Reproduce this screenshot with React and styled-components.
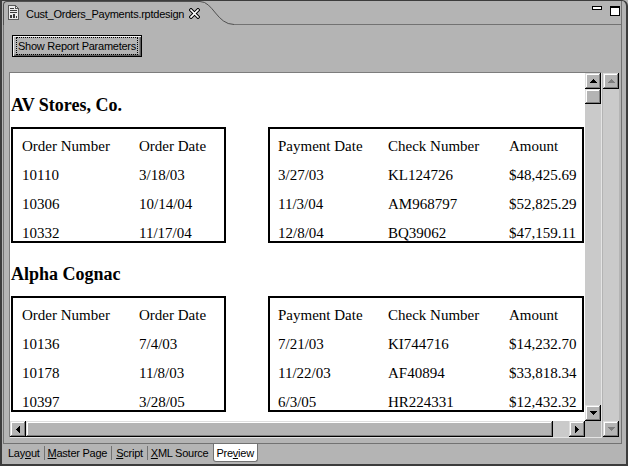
import React from 'react';
import styled, { createGlobalStyle } from 'styled-components';

const FACE = '#b4b4b4';
const TRACK = '#cacaca';
const LINE = '#727272';
const UI_FONT = '"Liberation Sans", Arial, sans-serif';
const SERIF = '"Liberation Serif", "Times New Roman", serif';

const Global = createGlobalStyle`
  html, body { margin: 0; padding: 0; background: ${FACE}; }
  body { width: 628px; height: 466px; overflow: hidden; }
  *, *::before, *::after { box-sizing: border-box; }
`;

const Window = styled.div`
  width: 628px;
  height: 466px;
  background: ${FACE};
  border: 2px solid #3c3c3c;
  border-top-width: 1px;
  border-top-right-radius: 6px;
  display: flex;
  flex-direction: column;
  overflow: hidden;
  font-family: ${UI_FONT};
  font-size: 11px;
  letter-spacing: -0.25px;
  color: #000;
`;

/* ---------- editor tab header ---------- */
const Header = styled.div`
  height: 24px;
  flex: none;
  display: flex;
  margin: 0 4px 0 1px;
`;

const TabBody = styled.div`
  height: 24px;
  display: flex;
  align-items: flex-start;
  border-top: 1px solid #505050;
  border-left: 1px solid #505050;
  border-top-left-radius: 4px;
  padding-left: 4px;
`;

const DocIconWrap = styled.span`
  display: flex;
  margin-top: 3px;
  margin-right: 7px;
`;

const TabTitle = styled.span`
  margin-top: 6px;
  line-height: 13px;
  white-space: nowrap;
`;

const CloseWrap = styled.span`
  display: flex;
  margin-top: 6px;
  margin-left: 5px;
`;

const Curve = styled.svg`
  flex: none;
  display: block;
`;

const HeaderRest = styled.div`
  flex: 1;
  border-bottom: 1px solid ${LINE};
  border-right: 1px solid ${LINE};
  display: flex;
  justify-content: flex-end;
  align-items: flex-start;
  gap: 8px;
  padding: 5px 1px 0 0;
`;

const MinBox = styled.div`
  width: 10px;
  height: 4px;
  border: 1px solid #000;
  background: #fff;
`;

const MaxBox = styled.div`
  width: 10px;
  height: 10px;
  border: 1px solid #000;
  border-top-width: 2px;
  background: #fff;
`;

/* ---------- editor body ---------- */
const Body = styled.div`
  flex: 1;
  display: flex;
  flex-direction: column;
  margin: 0 4px 0 1px;
  border-left: 1px solid ${LINE};
  border-right: 1px solid ${LINE};
  padding: 10px 0 0 5px;
`;

const ParamButton = styled.button`
  width: 130px;
  height: 22px;
  margin-left: 3px;
  padding: 0;
  font-family: ${UI_FONT};
  font-size: 11px;
  letter-spacing: -0.25px;
  color: #000;
  background: ${FACE};
  border: 1px solid #000;
  box-shadow: inset 1px 1px #f4f4f4, inset -1px -1px #5e5e5e, inset -2px -2px #8c8c8c;
  display: flex;
  align-items: center;
  justify-content: center;
`;

const FocusRing = styled.span`
  width: 122px;
  height: 18px;
  border: 1px dotted #000;
  display: flex;
  align-items: center;
  justify-content: center;
  white-space: nowrap;
`;

const PreviewRow = styled.div`
  margin-top: 15px;
  display: flex;
  align-items: flex-start;
`;

const Frame = styled.div`
  border-top: 1px solid #7d7d7d;
  border-left: 1px solid #7d7d7d;
  border-right: 1px solid #e4e4e4;
  border-bottom: 1px solid #e4e4e4;
  display: grid;
  grid-template-columns: 575px 16px;
  grid-template-rows: 348px 16px;
`;

const Viewport = styled.div`
  background: #fff;
  overflow: hidden;
  padding: 22px 0 0 1px;
`;

/* ---------- report content ---------- */
const Section = styled.section`
  margin-bottom: 21px;
`;

const Heading = styled.h2`
  margin: 0 0 12px;
  font-family: ${SERIF};
  font-weight: bold;
  font-size: 18px;
  line-height: 20px;
  letter-spacing: 0;
  white-space: nowrap;
`;

const Tables = styled.div`
  display: flex;
  gap: 42px;
`;

const Box = styled.div`
  width: ${(p) => p.$w}px;
  height: 116px;
  flex: none;
  border: 2px solid #000;
  padding: 3px 0 0 ${(p) => p.$pl}px;
  overflow: hidden;
  font-family: ${SERIF};
  font-size: 15px;
  line-height: 29px;
  letter-spacing: 0;
`;

const Row = styled.div`
  display: grid;
  grid-template-columns: ${(p) => p.$cols};
  white-space: nowrap;
`;

const Cell = styled.div`
  overflow: visible;
`;

/* ---------- scrollbars ---------- */
const ArrowBtn = styled.div`
  width: 16px;
  height: 16px;
  flex: none;
  background: ${FACE};
  box-shadow: inset -1px -1px #000, inset 1px 1px #dedede, inset -2px -2px #7c7c7c, inset 2px 2px #fff;
  display: flex;
  align-items: center;
  justify-content: center;
`;

const Thumb = styled.div`
  flex: none;
  width: ${(p) => (p.$horizontal ? `${p.$len}px` : '16px')};
  height: ${(p) => (p.$horizontal ? '16px' : `${p.$len}px`)};
  background: ${FACE};
  box-shadow: inset -1px -1px #000, inset 1px 1px #dedede, inset -2px -2px #7c7c7c, inset 2px 2px #fff;
`;

const Track = styled.div`
  flex: 1;
  background: ${TRACK};
`;

const VBar = styled.div`
  width: 16px;
  display: flex;
  flex-direction: column;
`;

const HBar = styled.div`
  height: 16px;
  display: flex;
`;

const Corner = styled.div`
  background: ${FACE};
`;

const OuterVBar = styled.div`
  width: 16px;
  height: 364px;
  margin: 1px 0 0 1px;
  display: flex;
  flex-direction: column;
  background: ${TRACK};
`;

/* ---------- bottom page tabs ---------- */
const PageTabs = styled.div`
  height: 21px;
  flex: none;
  margin: 0 4px 0 1px;
  border-top: 1px solid ${LINE};
  display: flex;
  align-items: flex-start;
`;

const PageTab = styled.div`
  height: 14px;
  margin-top: 2px;
  padding: 0 ${(p) => p.$pr}px 0 ${(p) => p.$pl}px;
  border-right: ${(p) => (p.$sep ? `1px solid ${LINE}` : 'none')};
  display: flex;
  align-items: center;
  white-space: nowrap;
`;

const ActiveTab = styled.div`
  height: 18px;
  padding: 0 3px 0 2px;
  background: #fff;
  border: 1px solid ${LINE};
  border-top: none;
  border-radius: 0 0 3px 3px;
  display: flex;
  align-items: center;
  white-space: nowrap;
`;

/* ---------- icons ---------- */
const UpArrow = ({ color = '#000' }) => (
  <svg width="7" height="4" viewBox="0 0 7 4" shapeRendering="crispEdges">
    <path d="M3 0h1v1h1v1h1v1h1v1H0V3h1V2h1V1h1z" fill={color} />
  </svg>
);
const DownArrow = ({ color = '#000' }) => (
  <svg width="7" height="4" viewBox="0 0 7 4" shapeRendering="crispEdges">
    <path d="M0 0h7v1H6v1H5v1H4v1H3V3H2V2H1V1H0z" fill={color} />
  </svg>
);
const LeftArrow = () => (
  <svg width="4" height="7" viewBox="0 0 4 7" shapeRendering="crispEdges">
    <path d="M3 0h1v7H3V6H2V5H1V4H0V3h1V2h1V1h1z" fill="#000" />
  </svg>
);
const RightArrow = () => (
  <svg width="4" height="7" viewBox="0 0 4 7" shapeRendering="crispEdges">
    <path d="M0 0h1v1h1v1h1v1h1v1H3v1H2v1H1v1H0z" fill="#000" />
  </svg>
);

const DocIcon = () => (
  <svg width="11" height="15" viewBox="0 0 11 15" shapeRendering="crispEdges">
    <path d="M0.5 0.5H7.5L10.5 3.5V14.5H0.5Z" fill="#ececec" stroke="#5a5a5a" />
    <path d="M7.5 0.5V3.5H10.5" fill="none" stroke="#5a5a5a" />
    <path d="M2 3.5H6M2 5.5H9M2 7.5H9" stroke="#3c3c3c" />
    <rect x="2" y="10" width="2" height="3" fill="#3c3c3c" />
    <rect x="5" y="9" width="2" height="4" fill="#3c3c3c" />
    <rect x="8" y="11" width="1" height="2" fill="#3c3c3c" />
  </svg>
);

const CloseIcon = () => (
  <svg width="11" height="11" viewBox="0 0 11 11">
    <path d="M2 2L9 9M9 2L2 9" stroke="#000" strokeWidth="3.6" strokeLinecap="square" />
    <path d="M2 2L9 9M9 2L2 9" stroke="#fff" strokeWidth="1.6" strokeLinecap="square" />
  </svg>
);

/* ---------- data ---------- */
const customers = [
  {
    name: 'AV Stores, Co.',
    orders: [
      ['10110', '3/18/03'],
      ['10306', '10/14/04'],
      ['10332', '11/17/04'],
    ],
    payments: [
      ['3/27/03', 'KL124726', '$48,425.69'],
      ['11/3/04', 'AM968797', '$52,825.29'],
      ['12/8/04', 'BQ39062', '$47,159.11'],
    ],
  },
  {
    name: 'Alpha Cognac',
    orders: [
      ['10136', '7/4/03'],
      ['10178', '11/8/03'],
      ['10397', '3/28/05'],
    ],
    payments: [
      ['7/21/03', 'KI744716', '$14,232.70'],
      ['11/22/03', 'AF40894', '$33,818.34'],
      ['6/3/05', 'HR224331', '$12,432.32'],
    ],
  },
];

const OrderCols = '117px 1fr';
const PayCols = '110px 121px 1fr';

const DataTable = ({ width, pl, cols, head, rows }) => (
  <Box $w={width} $pl={pl}>
    <Row $cols={cols}>
      {head.map((h) => (
        <Cell key={h}>{h}</Cell>
      ))}
    </Row>
    {rows.map((r, i) => (
      <Row $cols={cols} key={i}>
        {r.map((c, j) => (
          <Cell key={j}>{c}</Cell>
        ))}
      </Row>
    ))}
  </Box>
);

export default function App() {
  return (
    <>
      <Global />
      <Window>
        <Header>
          <TabBody>
            <DocIconWrap>
              <DocIcon />
            </DocIconWrap>
            <TabTitle>Cust_Orders_Payments.rptdesign</TabTitle>
            <CloseWrap>
              <CloseIcon />
            </CloseWrap>
          </TabBody>
          <Curve width="34" height="24" viewBox="0 0 34 24">
            <path d="M0 0.5 C 13 0.5, 17 23.5, 34 23.5" fill="none" stroke="#505050" />
          </Curve>
          <HeaderRest>
            <MinBox />
            <MaxBox />
          </HeaderRest>
        </Header>

        <Body>
          <ParamButton type="button">
            <FocusRing>Show Report Parameters</FocusRing>
          </ParamButton>

          <PreviewRow>
            <Frame>
              <Viewport>
                {customers.map((c) => (
                  <Section key={c.name}>
                    <Heading>{c.name}</Heading>
                    <Tables>
                      <DataTable
                        width={215}
                        pl={9}
                        cols={OrderCols}
                        head={['Order Number', 'Order Date']}
                        rows={c.orders}
                      />
                      <DataTable
                        width={316}
                        pl={8}
                        cols={PayCols}
                        head={['Payment Date', 'Check Number', 'Amount']}
                        rows={c.payments}
                      />
                    </Tables>
                  </Section>
                ))}
              </Viewport>
              <VBar>
                <ArrowBtn>
                  <UpArrow />
                </ArrowBtn>
                <Thumb $len={15} />
                <Track />
                <ArrowBtn>
                  <DownArrow />
                </ArrowBtn>
              </VBar>
              <HBar>
                <ArrowBtn>
                  <LeftArrow />
                </ArrowBtn>
                <Thumb $horizontal $len={527} />
                <Track />
                <ArrowBtn>
                  <RightArrow />
                </ArrowBtn>
              </HBar>
              <Corner />
            </Frame>
            <OuterVBar>
              <ArrowBtn>
                <UpArrow color="#7d7d7d" />
              </ArrowBtn>
              <Track />
              <ArrowBtn>
                <DownArrow color="#7d7d7d" />
              </ArrowBtn>
            </OuterVBar>
          </PreviewRow>
        </Body>

        <PageTabs>
          <PageTab $pl={5} $pr={4} $sep>
            Lay<u>o</u>ut
          </PageTab>
          <PageTab $pl={3} $pr={4} $sep>
            <u>M</u>aster Page
          </PageTab>
          <PageTab $pl={4} $pr={4} $sep>
            <u>S</u>cript
          </PageTab>
          <PageTab $pl={3} $pr={5}>
            <u>X</u>ML Source
          </PageTab>
          <ActiveTab>
            Pre<u>v</u>iew
          </ActiveTab>
        </PageTabs>
      </Window>
    </>
  );
}
